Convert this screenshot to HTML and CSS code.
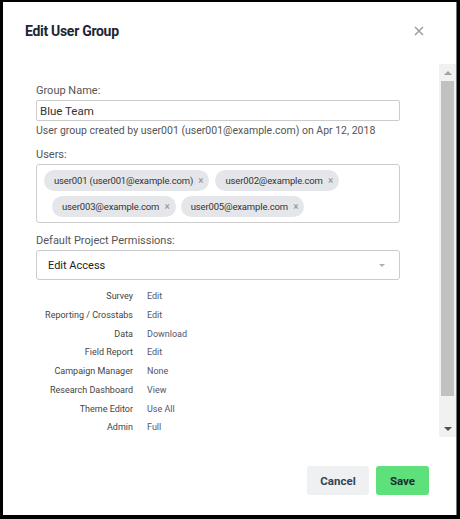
FILE: index.html
```html
<!DOCTYPE html>
<html lang="en">
<head>
  <meta charset="UTF-8">
  <title>Edit User Group</title>
  <link rel="stylesheet" href="styles.css">
</head>
<body>

  <div class="modal">
    <div class="modal-header">
      <h2 class="modal-title">Edit User Group</h2>
      <button class="close-btn" aria-label="Close">
        <svg width="10" height="10" viewBox="0 0 10 10">
          <path d="M1 1 L9 9 M9 1 L1 9" stroke="#9aa3ad" stroke-width="1.6" fill="none"/>
        </svg>
      </button>
    </div>

    <div class="body-wrap">
      <div class="modal-body">
        <!-- Group name -->
        <div class="field">
          <label class="field-label">Group Name:</label>
          <input class="text-input" type="text" value="Blue Team">
          <div class="help-text">User group created by user001 (user001@example.com) on Apr 12, 2018</div>
        </div>

        <!-- Users -->
        <div class="field users-field">
          <label class="field-label">Users:</label>
          <div class="tag-box">
            <div class="tag-row">
              <span class="tag">user001 (user001@example.com) <span class="tag-x">&times;</span></span>
              <span class="tag">user002@example.com <span class="tag-x">&times;</span></span>
            </div>
            <div class="tag-row indent">
              <span class="tag">user003@example.com <span class="tag-x">&times;</span></span>
              <span class="tag">user005@example.com <span class="tag-x">&times;</span></span>
            </div>
          </div>
        </div>

        <!-- Permissions -->
        <div class="field">
          <label class="field-label">Default Project Permissions:</label>
          <div class="select-box">
            <span>Edit Access</span>
            <span class="caret"></span>
          </div>
        </div>

        <div class="perm-table">
          <div class="perm-name">Survey</div><div class="perm-value">Edit</div>
          <div class="perm-name">Reporting / Crosstabs</div><div class="perm-value">Edit</div>
          <div class="perm-name">Data</div><div class="perm-value">Download</div>
          <div class="perm-name">Field Report</div><div class="perm-value">Edit</div>
          <div class="perm-name">Campaign Manager</div><div class="perm-value">None</div>
          <div class="perm-name">Research Dashboard</div><div class="perm-value">View</div>
          <div class="perm-name">Theme Editor</div><div class="perm-value">Use All</div>
          <div class="perm-name">Admin</div><div class="perm-value">Full</div>
        </div>
      </div>

      <!-- Scrollbar -->
      <div class="scrollbar">
        <div class="scroll-btn"><span class="arrow-up"></span></div>
        <div class="scroll-track"><div class="scroll-thumb"></div></div>
        <div class="scroll-btn"><span class="arrow-down"></span></div>
      </div>
    </div>

    <div class="modal-footer">
      <button class="btn btn-cancel">Cancel</button>
      <button class="btn btn-save">Save</button>
    </div>
  </div>

</body>
</html>
```

FILE: styles.css
```css
body {
  margin: 0;
  padding: 0;
  background: #000;
  font-family: Roboto, 'Noto Sans', sans-serif;
}

.modal {
  margin: 2px 3px 0 3px;
  width: 454px;
  height: 513px;
  background: #fff;
  border-right: 1px solid #777;
  box-sizing: border-box;
  display: flex;
  flex-direction: column;
}

.modal-header {
  height: 62px;
  box-sizing: border-box;
  padding: 18px 32px 0 22px;
  display: flex;
  justify-content: space-between;
  align-items: flex-start;
}

.modal-title {
  margin: 0;
  font-size: 14px;
  line-height: 22px;
  font-weight: 700;
  color: #1d2634;
  letter-spacing: -0.3px;
}

.close-btn {
  border: none;
  background: none;
  padding: 0;
  margin-top: 6px;
  cursor: pointer;
  line-height: 0;
}

.body-wrap {
  height: 373px;
  display: flex;
}

.modal-body {
  flex: 1;
  overflow: hidden;
  padding: 20px 39px 0 33px;
}

/* fake classic scrollbar */
.scrollbar {
  width: 17px;
  background: #f1f1f1;
  display: flex;
  flex-direction: column;
}

.scroll-btn {
  height: 17px;
  display: flex;
  align-items: center;
  justify-content: center;
}

.arrow-up {
  width: 0;
  height: 0;
  border-left: 4px solid transparent;
  border-right: 4px solid transparent;
  border-bottom: 4px solid #a3a3a3;
}

.arrow-down {
  width: 0;
  height: 0;
  border-left: 4px solid transparent;
  border-right: 4px solid transparent;
  border-top: 4px solid #505050;
}

.scroll-track {
  flex: 1;
  padding: 0 2px;
}

.scroll-thumb {
  height: 315px;
  background: #c1c1c1;
}

.field {
  margin-bottom: 10px;
}

.users-field {
  margin-bottom: 11px;
}

.field-label {
  display: block;
  font-size: 11px;
  line-height: 14px;
  color: #555;
  margin-bottom: 2px;
}

.text-input {
  display: block;
  width: 100%;
  height: 21px;
  box-sizing: border-box;
  border: 1px solid #ccc;
  border-radius: 2px;
  padding: 0 3px;
  font-family: Roboto, sans-serif;
  font-size: 11.5px;
  color: #333;
}

.help-text {
  margin-top: 3px;
  font-size: 10.5px;
  line-height: 14px;
  color: #555;
}

.tag-box {
  border: 1px solid #ccc;
  border-radius: 3px;
  padding: 5px 7px;
}

.tag-row {
  display: flex;
  gap: 6px;
}

.tag-row + .tag-row {
  margin-top: 5px;
}

.tag-row.indent {
  padding-left: 8px;
  gap: 5px;
}

.tag {
  display: inline-flex;
  align-items: center;
  height: 21px;
  padding: 0 6px 0 10px;
  border-radius: 11px;
  background: #e4e6e9;
  font-size: 9.5px;
  letter-spacing: -0.15px;
  color: #333;
  white-space: pre;
}

.tag-x {
  margin-left: 3px;
  color: #8a8f96;
  font-size: 10px;
}

.select-box {
  height: 30px;
  box-sizing: border-box;
  border: 1px solid #ccc;
  border-radius: 3px;
  padding: 0 14px 0 11px;
  display: flex;
  align-items: center;
  justify-content: space-between;
  font-size: 11px;
  color: #222;
}

.caret {
  width: 0;
  height: 0;
  border-left: 3.5px solid transparent;
  border-right: 3.5px solid transparent;
  border-top: 3.5px solid #b0b0b0;
}

.perm-table {
  margin-top: -3px;
  display: grid;
  grid-template-columns: 97px auto;
  column-gap: 14px;
  font-size: 9px;
  line-height: 18.75px;
}

.perm-name {
  text-align: right;
  color: #444;
}

.perm-value {
  color: #556;
}

.modal-footer {
  flex: 1;
  display: flex;
  justify-content: flex-end;
  gap: 7px;
  padding: 29px 27px 0 0;
}

.btn {
  height: 29px;
  border: none;
  border-radius: 3px;
  font-family: Roboto, sans-serif;
  font-size: 11.5px;
  font-weight: 700;
  cursor: pointer;
}

.btn-cancel {
  width: 62px;
  background: #eef0f2;
  color: #334455;
}

.btn-save {
  width: 53px;
  background: #5ee07a;
  color: #1e2b36;
}
```
